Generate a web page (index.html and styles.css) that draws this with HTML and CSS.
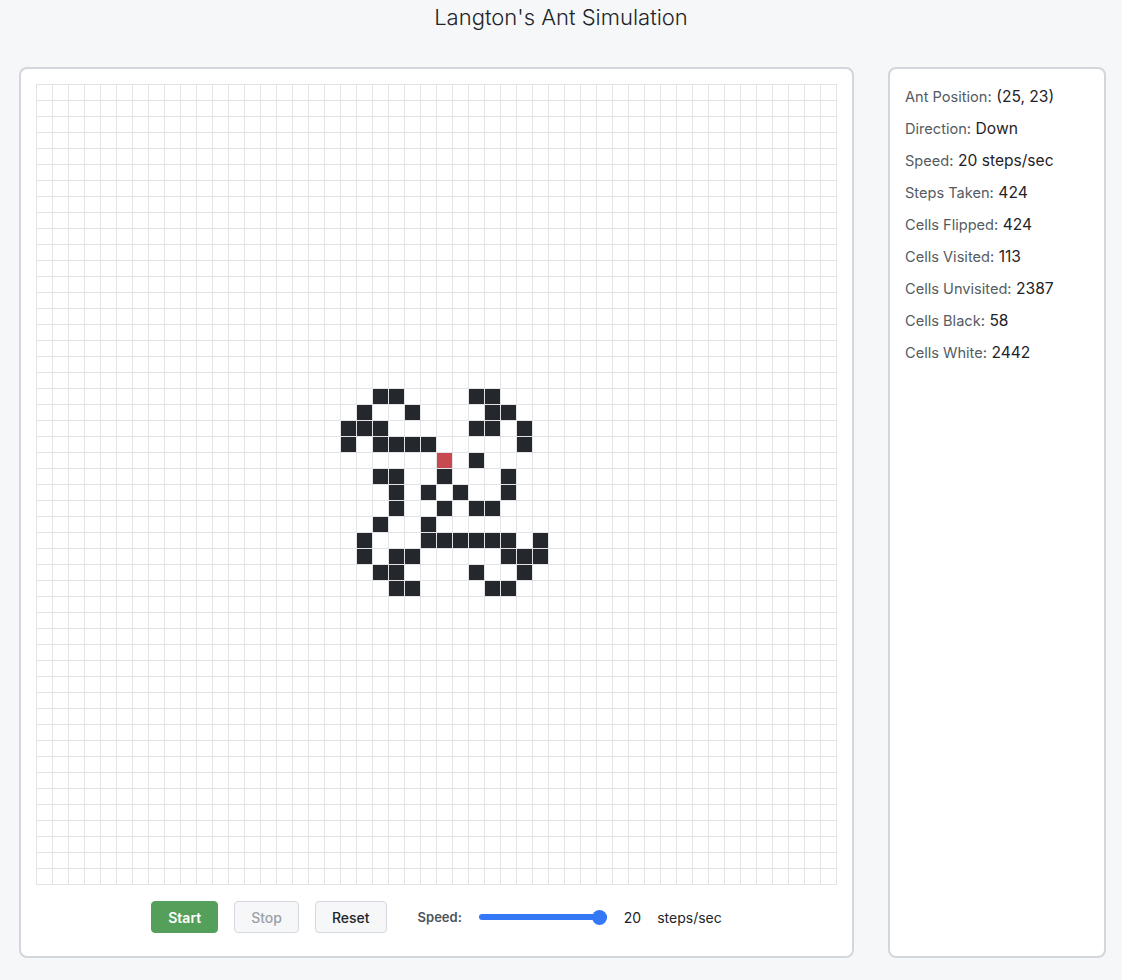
FILE: index.html
```html
<!DOCTYPE html>
<html lang="en">
<head>
<meta charset="utf-8">
<title>Langton's Ant Simulation</title>
<link rel="stylesheet" href="styles.css">
</head>
<body>
<h1 class="title">Langton's Ant Simulation</h1>
<main class="layout">
  <section class="board-panel">
    <div class="grid" id="grid"></div>
    <div class="controls">
      <button class="btn btn-start">Start</button>
      <button class="btn btn-stop" disabled>Stop</button>
      <button class="btn btn-reset">Reset</button>
      <label class="speed-label" for="speed">Speed:</label>
      <input class="speed-range" id="speed" type="range" min="1" max="20" value="20">
      <span class="speed-value">20</span>
      <span class="speed-unit">steps/sec</span>
    </div>
  </section>
  <aside class="stats-panel">
    <div class="stat"><span class="stat-label">Ant Position:</span> <span class="stat-value">(25, 23)</span></div>
    <div class="stat"><span class="stat-label">Direction:</span> <span class="stat-value">Down</span></div>
    <div class="stat"><span class="stat-label">Speed:</span> <span class="stat-value">20 steps/sec</span></div>
    <div class="stat"><span class="stat-label">Steps Taken:</span> <span class="stat-value">424</span></div>
    <div class="stat"><span class="stat-label">Cells Flipped:</span> <span class="stat-value">424</span></div>
    <div class="stat"><span class="stat-label">Cells Visited:</span> <span class="stat-value">113</span></div>
    <div class="stat"><span class="stat-label">Cells Unvisited:</span> <span class="stat-value">2387</span></div>
    <div class="stat"><span class="stat-label">Cells Black:</span> <span class="stat-value">58</span></div>
    <div class="stat"><span class="stat-label">Cells White:</span> <span class="stat-value">2442</span></div>
  </aside>
</main>
<script src="script.js"></script>
</body>
</html>
```
FILE: styles.css
```css
* { box-sizing: border-box; }
html, body { margin: 0; padding: 0; }
body {
  background: #f6f7f9;
  font-family: Inter, "Noto Sans", "Liberation Sans", sans-serif;
  color: #212529;
}
.title {
  margin: 0;
  font-size: 22px;
  line-height: 34px;
  font-weight: 300;
  text-align: center;
  color: #212529;
}
.layout {
  display: flex;
  align-items: flex-start;
  gap: 34px;
  margin-top: 33px;
  padding-left: 19px;
}
.board-panel {
  width: 835px;
  background: #fff;
  border: 2px solid #d3d6db;
  border-radius: 8px;
  padding: 15px 15px 23px;
}
.grid {
  display: grid;
  grid-template-columns: repeat(50, 15px);
  grid-auto-rows: 15px;
  gap: 1px;
  padding: 1px;
  width: 801px;
  height: 801px;
  background: #e2e3e6;
}
.cell { background: #fff; }
.cell.black { background: #24272c; }
.cell.ant { background: #c74a51; }
.controls {
  display: flex;
  align-items: center;
  justify-content: center;
  gap: 16px;
  margin-top: 16px;
  height: 32px;
}
.btn {
  height: 32px;
  padding: 0 16px;
  border-radius: 4px;
  font-family: inherit;
  font-size: 14px;
  font-weight: 500;
  border: 1px solid #d5d8dc;
  background: #f6f7f9;
  color: #212529;
}
.btn-start {
  font-weight: 600;
  background: #54a05b;
  border-color: #54a05b;
  color: #fff;
}
.btn-stop { color: #9aa0a6; }
.speed-label {
  margin-left: 15px;
  font-size: 13px;
  font-weight: 600;
  color: #4d5359;
}
.speed-range {
  -webkit-appearance: none;
  appearance: none;
  width: 128px;
  height: 6px;
  margin: 0 0 0 1px;
  border-radius: 3px;
  background: #3478f6;
  outline: none;
}
.speed-range::-webkit-slider-thumb {
  -webkit-appearance: none;
  appearance: none;
  width: 15px;
  height: 15px;
  border-radius: 50%;
  background: #3478f6;
  border: none;
}
.speed-value, .speed-unit {
  font-size: 14px;
  color: #212529;
}
.speed-value { margin-left: 1px; }
.stats-panel {
  width: 218px;
  height: 891px;
  background: #fff;
  border: 2px solid #d3d6db;
  border-radius: 8px;
  padding: 15px;
}
.stat {
  height: 24px;
  line-height: 24px;
  margin-bottom: 8px;
  white-space: nowrap;
}
.stat-label {
  font-size: 14.6px;
  color: #555b62;
}
.stat-value {
  font-size: 15.6px;
  color: #1f2328;
}
```
FILE: script.js
```js
(function () {
  var black = {
    19: [21, 22, 27, 28],
    20: [20, 23, 28, 29],
    21: [19, 20, 21, 27, 28, 30],
    22: [19, 21, 22, 23, 24, 30],
    23: [27],
    24: [21, 22, 25, 29],
    25: [22, 24, 26, 29],
    26: [22, 25, 27, 28],
    27: [21, 24],
    28: [20, 24, 25, 26, 27, 28, 29, 31],
    29: [20, 22, 23, 29, 30, 31],
    30: [21, 22, 27, 30],
    31: [22, 23, 28, 29]
  };
  var grid = document.getElementById('grid');
  var frag = document.createDocumentFragment();
  for (var r = 0; r < 50; r++) {
    for (var c = 0; c < 50; c++) {
      var d = document.createElement('div');
      d.className = 'cell';
      if (r === 23 && c === 25) d.className += ' ant';
      else if (black[r] && black[r].indexOf(c) !== -1) d.className += ' black';
      frag.appendChild(d);
    }
  }
  grid.appendChild(frag);
})();
```
